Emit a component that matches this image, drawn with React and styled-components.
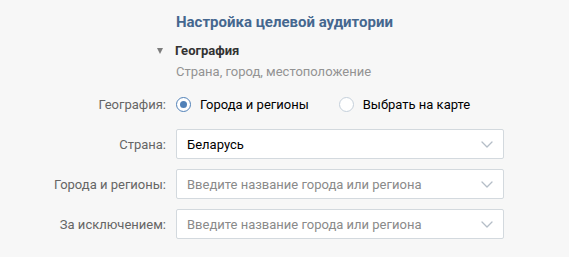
import React from 'react'
import styled, { createGlobalStyle } from 'styled-components'

const GlobalStyle = createGlobalStyle`
    html, body {
        margin: 0;
        padding: 0;
        background: #f7f7f7;
        font-family: Roboto, "Liberation Sans", Arial, sans-serif;
        -webkit-font-smoothing: antialiased;
    }
`

function Chevron() {
    return (
        <svg width="12" height="7" viewBox="0 0 12 7" fill="none">
            <path d="M1 1l5 5 5-5" stroke="#b4bdc7" strokeWidth="1.3" strokeLinecap="round" strokeLinejoin="round" />
        </svg>
    )
}

function Select({ value, placeholder }) {
    return (
        <SelectBox>
            {value ? <Value>{value}</Value> : <Placeholder>{placeholder}</Placeholder>}
            <Chevron />
        </SelectBox>
    )
}

function App() {
    return (
        <Page>
            <GlobalStyle />
            <Header>
                <Title>Настройка целевой аудитории</Title>
                <Toggle>
                    <Triangle />
                    <ToggleText>География</ToggleText>
                </Toggle>
                <Hint>Страна, город, местоположение</Hint>
            </Header>
            <Form>
                <Label>География:</Label>
                <Radios>
                    <Radio>
                        <RadioCircle checked />
                        <span>Города и регионы</span>
                    </Radio>
                    <Radio>
                        <RadioCircle />
                        <span>Выбрать на карте</span>
                    </Radio>
                </Radios>

                <Label>Страна:</Label>
                <Select value="Беларусь" />

                <Label>Города и регионы:</Label>
                <Select placeholder="Введите название города или региона" />

                <Label>За исключением:</Label>
                <Select placeholder="Введите название города или региона" />
            </Form>
        </Page>
    )
}

export default App

const Page = styled.div`
    width: 569px;
    height: 257px;
    padding-top: 13px;
    box-sizing: border-box;
`
const Header = styled.div`
    padding-left: 176px;
`
const Title = styled.div`
    font-size: 15px;
    line-height: 18px;
    font-weight: 700;
    color: #45678f;
`
const Toggle = styled.div`
    display: flex;
    align-items: center;
    gap: 12px;
    margin-left: -19px;
    margin-top: 12px;
    height: 16px;
`
const Triangle = styled.div`
    width: 0;
    height: 0;
    border-left: 3.5px solid transparent;
    border-right: 3.5px solid transparent;
    border-top: 6px solid #7d7d7d;
    margin-top: -1px;
`
const ToggleText = styled.div`
    font-size: 13px;
    line-height: 16px;
    font-weight: 700;
    color: #333;
`
const Hint = styled.div`
    margin-top: 5px;
    font-size: 13px;
    line-height: 16px;
    color: #939393;
`
const Form = styled.div`
    display: grid;
    grid-template-columns: 166px 328px;
    grid-auto-rows: 30px;
    column-gap: 10px;
    row-gap: 10px;
    margin-top: 9px;
`
const Label = styled.div`
    display: flex;
    align-items: center;
    justify-content: flex-end;
    font-size: 13px;
    color: #656565;
`
const Radios = styled.div`
    display: flex;
    align-items: center;
    gap: 30px;
`
const Radio = styled.label`
    display: flex;
    align-items: center;
    gap: 9px;
    font-size: 13px;
    color: #000;
`
const RadioCircle = styled.span`
    width: 15px;
    height: 15px;
    box-sizing: border-box;
    border-radius: 50%;
    border: 1px solid ${p => (p.checked ? '#5181b8' : '#c5d0db')};
    background: #fff;
    display: flex;
    align-items: center;
    justify-content: center;

    &::after {
        content: '';
        width: 7px;
        height: 7px;
        border-radius: 50%;
        background: #5181b8;
        display: ${p => (p.checked ? 'block' : 'none')};
    }
`
const SelectBox = styled.div`
    display: flex;
    align-items: center;
    justify-content: space-between;
    box-sizing: border-box;
    height: 30px;
    padding: 0 10px;
    background: #fff;
    border: 1px solid #d3d9de;
    border-radius: 2px;
    font-size: 13px;
`
const Value = styled.span`
    color: #000;
`
const Placeholder = styled.span`
    color: #8a8a8a;
`
